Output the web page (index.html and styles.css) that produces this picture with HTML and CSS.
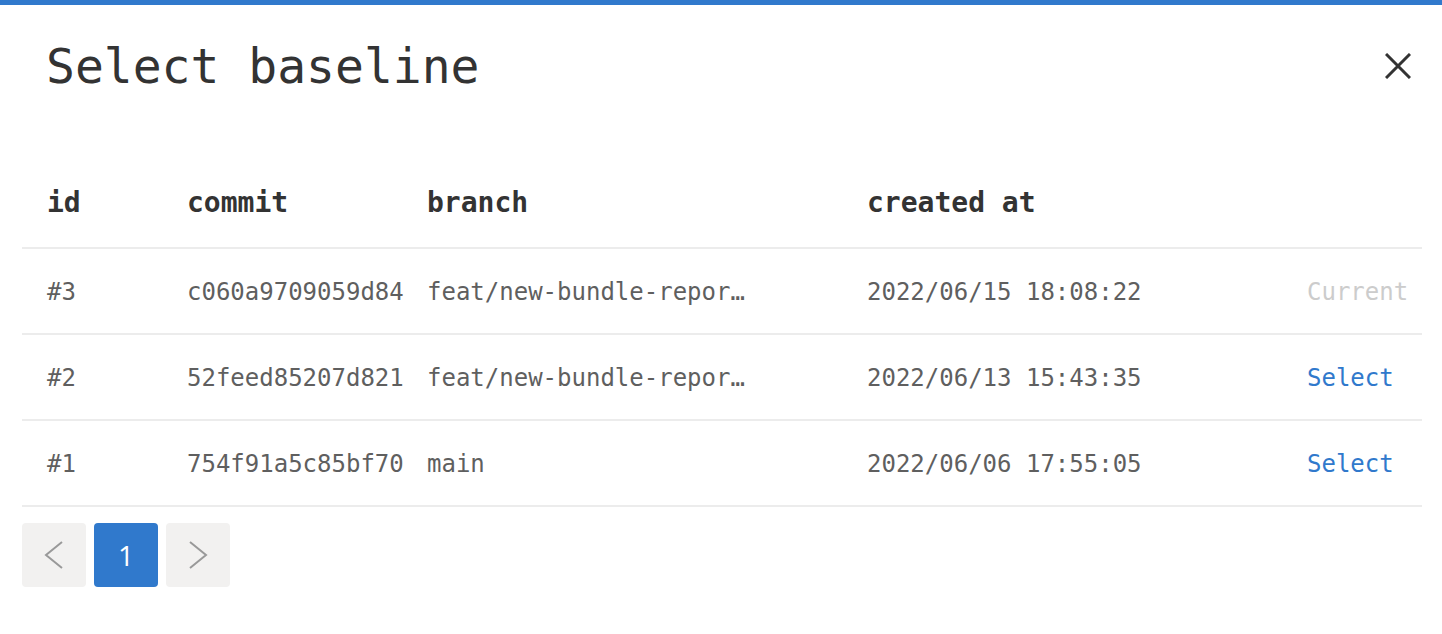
FILE: index.html
```html
<!DOCTYPE html>
<html lang="en">
<head>
<meta charset="utf-8">
<title>Select baseline</title>
<link rel="stylesheet" href="styles.css">
</head>
<body>
<div class="modal">
  <div class="modal-head">
    <h1 class="title">Select baseline</h1>
    <button class="close" aria-label="Close">
      <svg width="26" height="26" viewBox="0 0 26 26"><path d="M1 1 L25 25 M25 1 L1 25" stroke="#333" stroke-width="3" fill="none"/></svg>
    </button>
  </div>
  <table class="grid">
    <colgroup>
      <col class="c-id"><col class="c-commit"><col class="c-branch"><col class="c-date"><col class="c-action">
    </colgroup>
    <thead>
      <tr><th>id</th><th>commit</th><th>branch</th><th>created at</th><th></th></tr>
    </thead>
    <tbody>
      <tr>
        <td>#3</td><td>c060a9709059d84</td>
        <td><div class="trunc" title="feat/new-bundle-report-ui">feat/new-bundle-report-ui</div></td>
        <td>2022/06/15 18:08:22</td><td class="current">Current</td>
      </tr>
      <tr>
        <td>#2</td><td>52feed85207d821</td>
        <td><div class="trunc" title="feat/new-bundle-report-ui">feat/new-bundle-report-ui</div></td>
        <td>2022/06/13 15:43:35</td><td><a class="select" href="#">Select</a></td>
      </tr>
      <tr>
        <td>#1</td><td>754f91a5c85bf70</td>
        <td><div class="trunc">main</div></td>
        <td>2022/06/06 17:55:05</td><td><a class="select" href="#">Select</a></td>
      </tr>
    </tbody>
  </table>
  <div class="pager">
    <button class="pg">
      <svg width="20" height="28" viewBox="0 0 20 28"><path d="M18 1 L2 14 L18 27" stroke="#999" stroke-width="2" fill="none"/></svg>
    </button>
    <button class="pg active">1</button>
    <button class="pg">
      <svg width="20" height="28" viewBox="0 0 20 28"><path d="M2 1 L18 14 L2 27" stroke="#999" stroke-width="2" fill="none"/></svg>
    </button>
  </div>
</div>
</body>
</html>
```

FILE: styles.css
```css
html, body {
  margin: 0;
  padding: 0;
  background: #fff;
}
body {
  font-family: "DejaVu Sans Mono", "Liberation Mono", monospace;
  color: #333;
}
.modal {
  border-top: 5px solid #3079cc;
  padding: 0 22px;
}
.modal-head {
  display: flex;
  align-items: center;
  justify-content: space-between;
  padding: 33px 9px 0 24px;
}
.title {
  margin: 0;
  font-size: 48px;
  line-height: 56px;
  font-weight: normal;
  color: #333;
}
.close {
  border: 0;
  background: none;
  padding: 0;
  width: 26px;
  height: 26px;
  display: flex;
}
.grid {
  margin-top: 92px;
  width: 1400px;
  table-layout: fixed;
  border-collapse: collapse;
}
.c-id { width: 140px; }
.c-commit { width: 240px; }
.c-branch { width: 440px; }
.c-date { width: 440px; }
.c-action { width: 140px; }
.grid th {
  text-align: left;
  font-size: 28px;
  line-height: 34px;
  font-weight: bold;
  color: #333;
  padding: 0 0 27px 25px;
  border-bottom: 2px solid #ececec;
  white-space: nowrap;
}
.grid td {
  font-size: 24px;
  line-height: 30px;
  color: #5f5f5f;
  height: 80px;
  padding: 3px 0 1px 25px;
  vertical-align: middle;
  border-bottom: 2px solid #ececec;
  white-space: nowrap;
}
.trunc {
  width: 319px;
  overflow: hidden;
  text-overflow: ellipsis;
  white-space: nowrap;
}
.grid td.current {
  color: #cccccc;
}
.select {
  color: #3079cc;
  text-decoration: none;
}
.pager {
  display: flex;
  gap: 8px;
  margin-top: 16px;
}
.pg {
  width: 64px;
  height: 64px;
  border: 0;
  border-radius: 4px;
  background: #f2f1f0;
  display: flex;
  align-items: center;
  justify-content: center;
  padding: 0;
  font-family: "Open Sans", "Noto Sans", sans-serif;
  font-size: 28px;
  color: #fff;
}
.pg.active {
  background: #3079cc;
}
```
